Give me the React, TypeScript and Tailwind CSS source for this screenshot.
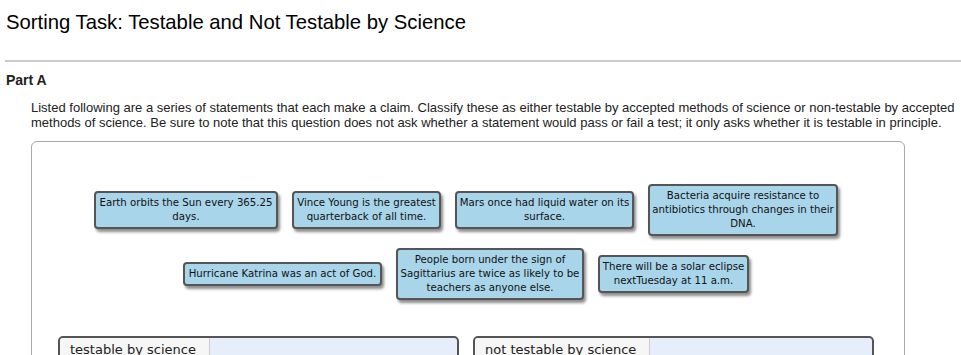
import React from 'react';

type Card = { text: string; w: string };

const rowOne: Card[] = [
  { text: 'Earth orbits the Sun every 365.25 days.', w: 'w-[184px]' },
  { text: 'Vince Young is the greatest quarterback of all time.', w: 'w-[149px]' },
  { text: 'Mars once had liquid water on its surface.', w: 'w-[179px]' },
  { text: 'Bacteria acquire resistance to antibiotics through changes in their DNA.', w: 'w-[190px]' },
];

const rowTwo: Card[] = [
  { text: 'Hurricane Katrina was an act of God.', w: 'w-[199px]' },
  { text: 'People born under the sign of Sagittarius are twice as likely to be teachers as anyone else.', w: 'w-[188px]' },
  { text: 'There will be a solar eclipse nextTuesday at 11 a.m.', w: 'w-[151px]' },
];

const Chip: React.FC<{ card: Card }> = ({ card }) => (
  <div
    className={`${card.w} rounded-[4px] border-2 border-[#555] bg-[#a8d5ea] px-[2px] py-[3px] text-center text-[10.2px] leading-[14px] text-[#111] shadow-[2px_3px_3px_rgba(0,0,0,0.45)] font-['DejaVu_Sans',Verdana,sans-serif]`}
  >
    {card.text}
  </div>
);

const DropZone: React.FC<{ label: string }> = ({ label }) => (
  <div className="flex h-[40px] w-[401px] overflow-hidden rounded-t-[5px] border-2 border-[#555] bg-[#e7eefb]">
    <div className="shrink-0 whitespace-nowrap border-r border-[#ccc] bg-[#f6f6f6] pl-[10px] pr-[13px] pt-[3px] text-[13px] leading-[18px] text-[#222] font-['DejaVu_Sans',Verdana,sans-serif]">
      {label}
    </div>
    <div className="flex-1" />
  </div>
);

const App: React.FC = () => {
  return (
    <div className="h-[355px] w-[961px] overflow-hidden bg-white font-['Liberation_Sans',Arial,sans-serif] text-black">
      {/* 标题 */}
      <h1 className="pl-[6px] pt-[9px] text-[20.3px] leading-[26px]">
        Sorting Task: Testable and Not Testable by Science
      </h1>

      <div className="ml-[5px] mt-[25px] h-[2px] bg-[#cccccc]" />

      <h2 className="pl-[6px] pt-[10px] text-[14px] font-bold leading-[16px] text-[#222]">Part A</h2>

      <p className="mt-[12px] pl-[31px] pr-[4px] text-[13px] leading-[15px] text-[#222]">
        Listed following are a series of statements that each make a claim. Classify these as either testable by
        accepted methods of science or non-testable by accepted methods of science. Be sure to note that this question
        does not ask whether a statement would pass or fail a test; it only asks whether it is testable in principle.
      </p>

      {/* 排序区域 */}
      <div className="ml-[31px] mt-[11px] w-[874px] rounded-[6px] border border-[#aaaaaa] pt-[42px]">
        <div className="flex items-center justify-center gap-[14px] pr-[4px]">
          {rowOne.map((c) => (
            <Chip key={c.text} card={c} />
          ))}
        </div>
        <div className="mt-[12px] flex items-center justify-center gap-[14px] pr-[4px]">
          {rowTwo.map((c) => (
            <Chip key={c.text} card={c} />
          ))}
        </div>
        <div className="mt-[36px] flex justify-center gap-[14px] pr-[4px]">
          <DropZone label="testable by science" />
          <DropZone label="not testable by science" />
        </div>
      </div>
    </div>
  );
};

export default App;
